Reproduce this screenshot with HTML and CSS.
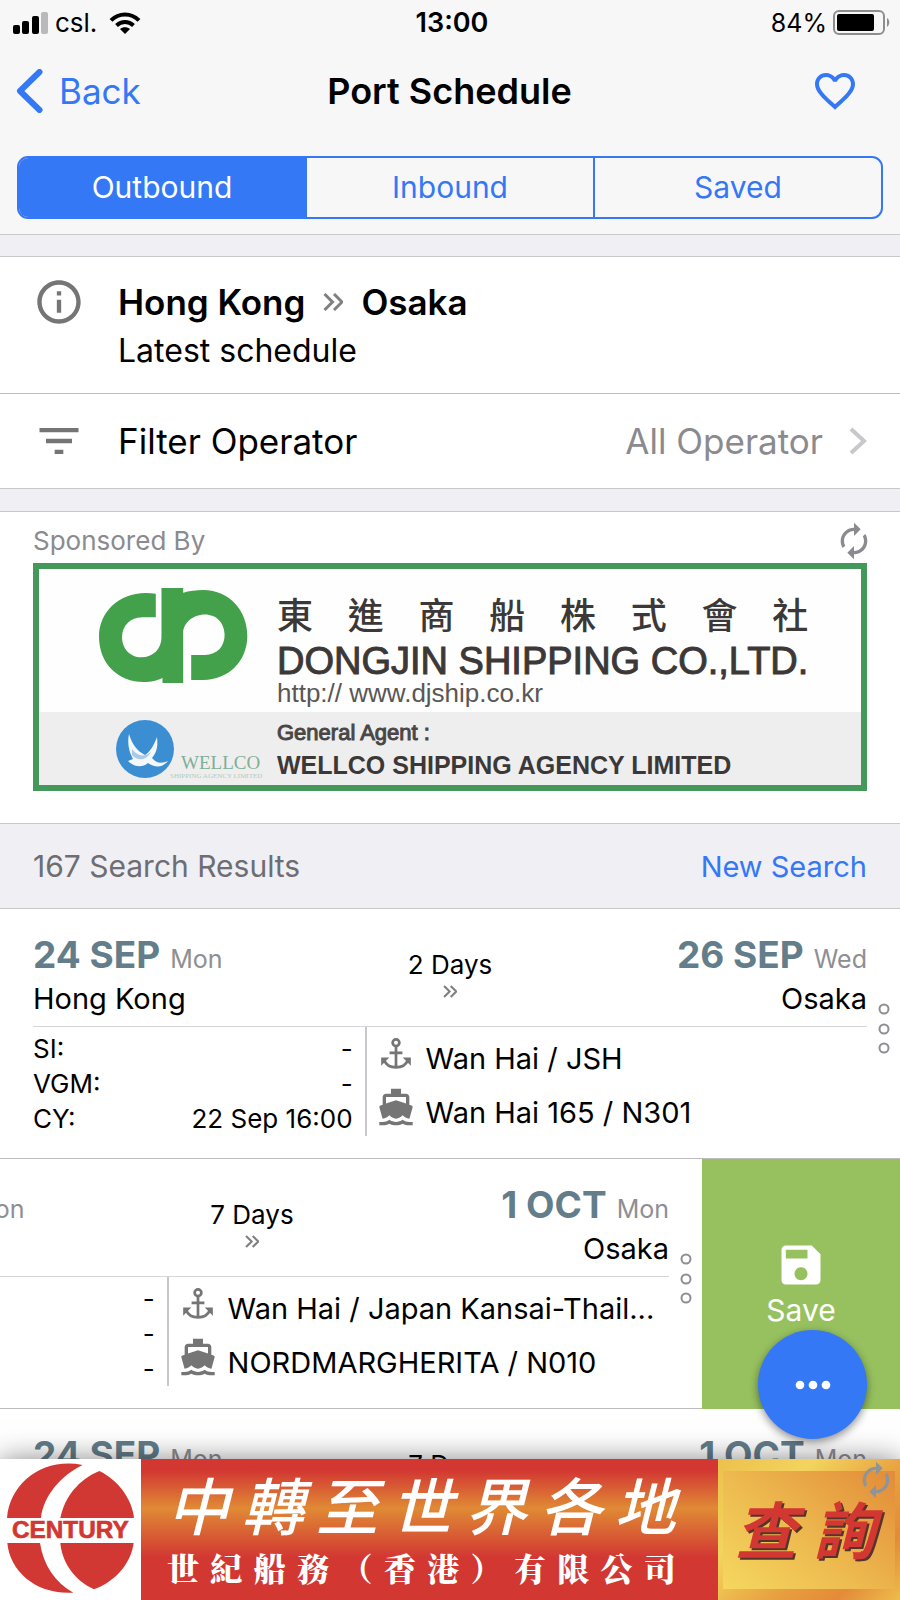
FILE: index.html
```html
<!DOCTYPE html>
<html lang="en">
<head>
<meta charset="utf-8">
<meta name="viewport" content="width=device-width, initial-scale=1">
<title>Port Schedule</title>
<link rel="stylesheet" href="styles.css">
</head>
<body>
<svg class="defs" aria-hidden="true">
  <symbol id="i-double" viewBox="0 0 20 18"><path d="M1.500 1l8 8-8 8M11 1l8 8-8 8" fill="none" stroke="currentColor" stroke-width="3"/></symbol>
  <symbol id="i-refresh" viewBox="0 0 24 24"><path fill="currentColor" d="M12 6v3l4-4-4-4v3c-4.42 0-8 3.58-8 8 0 1.57.46 3.03 1.24 4.26L6.7 14.8c-.45-.83-.7-1.79-.7-2.8 0-3.31 2.69-6 6-6zm6.76 1.74L17.3 9.2c.44.84.7 1.79.7 2.8 0 3.31-2.69 6-6 6v-3l-4 4 4 4v-3c4.42 0 8-3.58 8-8 0-1.57-.46-3.03-1.24-4.26z"/></symbol>
  <symbol id="i-anchor" viewBox="0 0 88 92"><g fill="none" stroke="currentColor" stroke-width="8"><circle cx="44" cy="14" r="10"/><path d="M44 24v62M25 44h38M9 66c5 13 19 21 35 21s30-8 35-21"/></g><path fill="currentColor" d="M0 58h24L0 82zM88 58H64l24 24z"/></symbol>
  <symbol id="i-boat" viewBox="0 0 24 24"><path fill="currentColor" d="M20 21c-1.39 0-2.78-.47-4-1.32-2.44 1.71-5.56 1.71-8 0C6.78 20.53 5.39 21 4 21H2v2h2c1.38 0 2.74-.35 4-.99 2.52 1.29 5.48 1.29 8 0 1.26.65 2.62.99 4 .99h2v-2h-2zM3.95 19H4c1.6 0 3.02-.88 4-2 .98 1.12 2.4 2 4 2s3.02-.88 4-2c.98 1.12 2.4 2 4 2h.05l1.89-6.68c.08-.26.06-.54-.06-.78s-.34-.42-.6-.5L20 10.62V6c0-1.1-.9-2-2-2h-3V1H9v3H6c-1.1 0-2 .9-2 2v4.62l-1.29.42c-.26.08-.48.26-.6.5s-.15.52-.06.78L3.95 19zM6 6h12v3.97L12 8 6 9.97V6z"/></symbol>
  <symbol id="i-rings" viewBox="0 0 12 52"><g fill="none" stroke="currentColor" stroke-width="2"><circle cx="6" cy="6" r="4.5"/><circle cx="6" cy="26" r="4.5"/><circle cx="6" cy="45" r="4.5"/></g></symbol>
</svg>

<div class="app">
  <header class="header">
    <div class="status">
      <div class="status-left">
        <svg width="36" height="22" viewBox="0 0 36 22"><rect x="0" y="13" width="7" height="9" rx="2"/><rect x="9" y="9" width="7" height="13" rx="2"/><rect x="19" y="4" width="7" height="18" rx="2"/><rect x="28" y="0" width="7" height="22" rx="2" fill="#b9b9bb"/></svg>
        <span>csl.</span>
        <svg class="wifi" width="32" height="22" viewBox="0 0 32 22"><g fill="none" stroke="#000" stroke-width="4"><path d="M2 8.300C10 .400 22 .400 30 8.300"/><path d="M7.500 13.500c5-4.600 12-4.600 17 0"/></g><path d="M16 22l-5-5c2.800-2.400 7.200-2.400 10 0z"/></svg>
      </div>
      <time class="clock">13:00</time>
      <div class="status-right">
        <span>84%</span>
        <svg width="58" height="26" viewBox="0 0 58 26"><rect x="1" y="1" width="50" height="23" rx="5" fill="none" stroke="#8e8e8e" stroke-width="2"/><rect x="4" y="4" width="37" height="17" rx="2"/><path d="M54 8c3 1.500 3 7 0 9z" fill="#8e8e8e"/></svg>
      </div>
    </div>
    <nav class="nav">
      <button class="back" type="button">
        <svg width="28" height="44" viewBox="0 0 28 44"><path d="M23.500 3L4 22l19.500 19" fill="none" stroke="currentColor" stroke-width="6" stroke-linecap="round" stroke-linejoin="round"/></svg>
        Back
      </button>
      <h1 class="title">Port Schedule</h1>
      <button class="favorite" type="button" aria-label="Favorite">
        <svg width="48" height="48" viewBox="0 0 24 24"><path fill="currentColor" d="M16.500 3c-1.740 0-3.410.810-4.500 2.090C10.910 3.810 9.240 3 7.500 3 4.420 3 2 5.420 2 8.500c0 3.780 3.400 6.860 8.550 11.540L12 21.350l1.450-1.320C18.600 15.360 22 12.280 22 8.500 22 5.420 19.580 3 16.500 3zm-4.400 15.550l-.100.100-.100-.100C7.140 14.240 4 11.390 4 8.500 4 6.500 5.500 5 7.500 5c1.540 0 3.040.990 3.570 2.360h1.870C13.460 5.990 14.960 5 16.500 5c2 0 3.500 1.500 3.500 3.500 0 2.890-3.140 5.740-7.900 10.050z"/></svg>
      </button>
    </nav>
    <div class="segments">
      <button class="segment active" type="button">Outbound</button>
      <button class="segment" type="button">Inbound</button>
      <button class="segment" type="button">Saved</button>
    </div>
  </header>

  <section class="group">
    <div class="info-row">
      <div class="lead"><svg width="52" height="52" viewBox="0 0 24 24"><path fill="currentColor" d="M11 17h2v-6h-2v6zm1-15C6.480 2 2 6.480 2 12s4.480 10 10 10 10-4.480 10-10S17.520 2 12 2zm0 18c-4.410 0-8-3.590-8-8s3.590-8 8-8 8 3.590 8 8-3.590 8-8 8zM11 9h2V7h-2v2z"/></svg></div>
      <div class="info-text">
        <h2 class="route">Hong Kong <svg class="route-arrow" width="20" height="18"><use href="#i-double"/></svg> Osaka</h2>
        <p class="sub">Latest schedule</p>
      </div>
    </div>
    <button class="filter-row" type="button">
      <span class="lead"><svg width="52" height="52" viewBox="0 0 24 24"><path fill="currentColor" d="M10 18h4v-2h-4v2zM3 6v2h18V6H3zm3 7h12v-2H6v2z"/></svg></span>
      <span class="filter-label">Filter Operator</span>
      <span class="filter-value">All Operator</span>
      <svg class="chevron" width="18" height="28" viewBox="0 0 18 28"><path d="M2 2l13 12L2 26" fill="none" stroke="currentColor" stroke-width="4"/></svg>
    </button>
  </section>

  <section class="sponsor">
    <div class="sponsor-head">
      <span>Sponsored By</span>
      <button class="refresh" type="button" aria-label="Refresh sponsor"><svg width="40" height="40"><use href="#i-refresh"/></svg></button>
    </div>
    <a class="banner" href="#dongjin">
      <span class="banner-top">
        <svg class="dj-logo" width="149" height="97" viewBox="238 112 446 290"><g fill="#43a04b"><path d="M408 132C310 116 238 180 238 260c0 85 62 140 142 136 20-1 40-8 48-12v15h62V115h-65v147c0 35-25 60-60 60s-58-27-58-60c0-35 25-60 60-60h41z"/><path d="M488 130c20-7 42-9 62-9 80 0 132 64 132 137 0 77-57 132-132 132h-36v-75h41c37 0 59-25 59-60s-24-61-59-61c-37 0-67 26-67 64z"/></g></svg>
        <span class="dj-text">
          <span class="dj-cjk" lang="zh-Hant">東進商船株式會社</span>
          <span class="dj-name">DONGJIN SHIPPING CO.,LTD.</span>
          <span class="dj-url">http:// www.djship.co.kr</span>
        </span>
      </span>
      <span class="banner-bottom">
        <svg class="wellco" width="149" height="62" viewBox="0 0 149 62"><circle cx="30" cy="29" r="29" fill="#3b8ed2"/><path d="M14 14c3 10 8 17 16 21 5-3 9-10 12-18 1 9 0 15-5 21 4 5 9 6 16 3-6 7-13 7-20 2-6 5-14 4-20-2l5-2c-4-7-6-16-4-25z" fill="#f4f8fc"/><path d="M17 29c5 7 12 9 19 3-4 8-13 10-19 3z" fill="#a9c9e6"/><text x="66" y="49" class="wellco-name">WELLCO</text><text x="55" y="58" class="wellco-sub">SHIPPING AGENCY LIMITED</text></svg>
        <span class="agent-text">
          <span class="agent-label">General Agent :</span>
          <span class="agent-name">WELLCO SHIPPING AGENCY LIMITED</span>
        </span>
      </span>
    </a>
  </section>

  <div class="results">
    <span>167 Search Results</span>
    <a class="new-search" href="#search">New Search</a>
  </div>

  <main class="list">
    <article class="row">
      <div class="card">
        <div class="card-body">
          <div class="voyage">
            <div class="stop"><p class="when"><b class="date">24 SEP</b> <span class="day">Mon</span></p><p>Hong Kong</p></div>
            <div class="transit"><span>2 Days</span><svg width="14" height="13"><use href="#i-double"/></svg></div>
            <div class="stop end"><p class="when"><b class="date">26 SEP</b> <span class="day">Wed</span></p><p>Osaka</p></div>
          </div>
          <div class="details">
            <dl class="cutoffs">
              <dt>SI:</dt><dd>-</dd>
              <dt>VGM:</dt><dd>-</dd>
              <dt>CY:</dt><dd>22 Sep 16:00</dd>
            </dl>
            <div class="vessel">
              <p><svg class="vessel-icon" width="40" height="31"><use href="#i-anchor"/></svg>Wan Hai / JSH</p>
              <p><svg class="vessel-icon" width="40" height="40"><use href="#i-boat"/></svg>Wan Hai 165 / N301</p>
            </div>
          </div>
        </div>
        <button class="more" type="button" aria-label="More"><svg width="12" height="52"><use href="#i-rings"/></svg></button>
      </div>
    </article>

    <article class="row swiped">
      <div class="card">
        <div class="card-body">
          <div class="voyage">
            <div class="stop"><p class="when"><b class="date">24 SEP</b> <span class="day">Mon</span></p><p>Hong Kong</p></div>
            <div class="transit"><span>7 Days</span><svg width="14" height="13"><use href="#i-double"/></svg></div>
            <div class="stop end"><p class="when"><b class="date">1 OCT</b> <span class="day">Mon</span></p><p>Osaka</p></div>
          </div>
          <div class="details">
            <dl class="cutoffs">
              <dt>SI:</dt><dd>-</dd>
              <dt>VGM:</dt><dd>-</dd>
              <dt>CY:</dt><dd>-</dd>
            </dl>
            <div class="vessel">
              <p><svg class="vessel-icon" width="40" height="31"><use href="#i-anchor"/></svg>Wan Hai / Japan Kansai-Thail...</p>
              <p><svg class="vessel-icon" width="40" height="40"><use href="#i-boat"/></svg>NORDMARGHERITA / N010</p>
            </div>
          </div>
        </div>
        <button class="more" type="button" aria-label="More"><svg width="12" height="52"><use href="#i-rings"/></svg></button>
      </div>
      <button class="save" type="button">
        <svg width="52" height="52" viewBox="0 0 24 24"><path fill="currentColor" d="M17 3H5c-1.110 0-2 .900-2 2v14c0 1.100.890 2 2 2h14c1.100 0 2-.900 2-2V7l-4-4zm-5 16c-1.660 0-3-1.340-3-3s1.340-3 3-3 3 1.340 3 3-1.340 3-3 3zm3-10H5V5h10v4z"/></svg>
        Save
      </button>
    </article>

    <article class="row">
      <div class="card">
        <div class="card-body">
          <div class="voyage">
            <div class="stop"><p class="when"><b class="date">24 SEP</b> <span class="day">Mon</span></p></div>
            <div class="transit"><span>7 Days</span></div>
            <div class="stop end"><p class="when"><b class="date">1 OCT</b> <span class="day">Mon</span></p></div>
          </div>
        </div>
        <div class="more"></div>
      </div>
    </article>
  </main>

  <button class="fab" type="button" aria-label="Options"><svg width="52" height="52" viewBox="0 0 24 24"><g fill="#fff"><circle cx="6" cy="12" r="2"/><circle cx="12" cy="12" r="2"/><circle cx="18" cy="12" r="2"/></g></svg></button>

  <footer class="ad">
    <div class="ad-logo">
      <svg width="141" height="140" viewBox="0 180 423 420"><g fill="#d23833"><path d="M21 357C30 250 130 175 248 198 185 228 130 290 123 357z"/><path d="M181 357c12-62 55-116 117-141 58 28 98 85 104 141z"/><path d="M22 432h98c10 66 45 118 100 149C112 588 30 520 22 432z"/><path d="M181 432h220c-8 62-56 116-119 139-58-26-96-80-101-139z"/></g><text x="36" y="416" class="century">CENTURY</text></svg>
    </div>
    <div class="ad-main" lang="zh-Hant">
      <p class="ad-line1">中轉至世界各地</p>
      <p class="ad-line2">世紀船務（香港）有限公司</p>
    </div>
    <a class="ad-cta" href="#enquiry" lang="zh-Hant"><span>查詢</span></a>
    <button class="ad-refresh" type="button" aria-label="Refresh ad"><svg width="40" height="40"><use href="#i-refresh"/></svg></button>
  </footer>
</div>
</body>
</html>
```
FILE: styles.css
```css
* { box-sizing: border-box; }
body, h1, h2, p, dl, dd { margin: 0; }
body { font-family: Inter, "Liberation Sans", "Noto Sans CJK TC", sans-serif; font-size: 30px; color: #000; background: #fff; }
button { padding: 0; border: 0; background: none; font: inherit; color: inherit; cursor: pointer; }
a { color: inherit; text-decoration: none; }
svg { display: block; flex: none; }
.defs { position: absolute; width: 0; height: 0; }
.app { position: relative; height: 100vh; overflow: hidden; }

.header { background: #f7f7f7; border-bottom: 1px solid #c8c7cc; padding-bottom: 15px; }
.status { display: grid; grid-template-columns: 1fr auto 1fr; align-items: center; height: 45px; padding: 0 9px 0 13px; font-size: 26px; }
.status-left, .status-right { display: flex; align-items: center; gap: 6px; }
.status-right { justify-content: flex-end; font-size: 25px; }
.wifi { margin-left: 6px; }
.clock { font-size: 27px; font-weight: 600; }
.nav { display: grid; grid-template-columns: 1fr auto 1fr; align-items: center; height: 91px; padding: 0 41px 0 16px; }
.back { display: flex; align-items: center; gap: 15px; justify-self: start; color: #3478f6; font-size: 35px; }
.title { font-size: 36px; font-weight: 600; padding-left: 24px; }
.favorite { justify-self: end; color: #3478f6; }
.segments { display: flex; margin: 20px 17px 0; border: 2px solid #3478f6; border-radius: 11px; overflow: hidden; }
.segment { flex: 1; height: 59px; padding-bottom: 2px; color: #3478f6; font-size: 30px; border-left: 2px solid #3478f6; }
.segment:first-child { border-left: 0; }
.segment.active { background: #3478f6; color: #fff; }

.group { border-top: 22px solid #efeff4; background: #fff; }
.info-row { display: flex; padding: 22px 0; box-shadow: 0 -1px #c8c7cc; border-bottom: 1px solid #bcbbc0; }
.lead { flex: none; width: 118px; display: flex; justify-content: center; color: #757575; }
.info-row .lead { height: 46px; align-items: center; }
.route { display: flex; align-items: center; gap: 18px; font-size: 35px; line-height: 46px; font-weight: 600; }
.route-arrow { color: #808080; }
.sub { margin-top: 6px; font-size: 32px; line-height: 40px; }
.filter-row { display: flex; align-items: center; width: 100%; height: 95px; padding-right: 33px; border-bottom: 1px solid #c8c7cc; font-size: 35px; text-align: left; }
.filter-label { flex: 1; }
.filter-value { color: #8a8a8f; }
.chevron { margin-left: 26px; color: #c7c7cc; }

.sponsor { border-top: 22px solid #efeff4; border-bottom: 1px solid #c8c7cc; padding: 0 33px 32px; }
.sponsor-head { display: flex; align-items: center; justify-content: space-between; height: 52px; margin: 0 -33px; padding: 6px 26px 0 33px; border-top: 1px solid #c8c7cc; color: #8a8a8f; font-size: 26px; }
.banner { display: block; border: 6px solid #43985a; background: #fefefe; color: #3c3837; font-family: "Liberation Sans", Arial, sans-serif; }
.banner-top { display: flex; gap: 29px; height: 143px; padding: 18px 54px 0 60px; }
.dj-text { flex: 1; display: flex; flex-direction: column; padding-top: 6px; }
.dj-cjk { font-family: "Noto Sans CJK TC", sans-serif; font-weight: 500; font-size: 36px; line-height: 40px; text-align: justify; text-align-last: justify; }
.dj-name { margin-top: 8px; font-size: 38px; line-height: 40px; white-space: nowrap; -webkit-text-stroke: 1px #3c3837; }
.dj-url { font-size: 26px; line-height: 24px; color: #5a5655; }
.banner-bottom { display: flex; gap: 13px; height: 73px; padding: 8px 0 0 76px; background: #eee; }
.wellco-name { font: 19px "Liberation Serif", serif; fill: #7fae97; }
.wellco-sub { font: 7px "Liberation Serif", serif; fill: #b4cbbf; }
.agent-text { display: flex; flex-direction: column; gap: 4px; }
.agent-label { font-size: 22px; line-height: 26px; -webkit-text-stroke: 1px #4a4645; color: #4a4645; }
.agent-name { font-size: 25px; line-height: 30px; font-weight: 700; white-space: nowrap; }

.results { display: flex; align-items: center; justify-content: space-between; height: 85px; padding: 0 33px; background: #efeff4; border-bottom: 1px solid #c8c7cc; color: #6d6d72; }
.new-search { color: #3478f6; font-size: 29px; }

.row { display: flex; overflow: hidden; }
.card { flex: 0 0 100%; display: flex; min-height: 250px; border-bottom: 1px solid #bcbbc0; padding: 24px 0 18px 33px; background: #fff; font-size: 29px; }
.swiped .card { margin-left: -198px; }
.card-body { flex: 1; min-width: 0; }
.voyage { display: grid; grid-template-columns: 1fr auto 1fr; padding-bottom: 5px; border-bottom: 1px solid #d5d5d8; line-height: 44px; }
.when { display: flex; align-items: baseline; gap: 10px; height: 44px; }
.end { text-align: right; }
.end .when { justify-content: flex-end; }
.date { font-size: 37px; color: #647d8b; }
.day { font-size: 25px; color: #8e8e93; }
.transit { display: flex; flex-direction: column; align-items: center; gap: 4px; padding-top: 16px; font-size: 26px; line-height: 32px; }
.transit svg { color: #808080; }
.details { display: flex; align-items: flex-start; }
.cutoffs { flex: 0 0 40%; display: grid; grid-template-columns: auto 1fr; padding: 4px 12px 0 0; border-right: 2px solid #c8c7cc; font-size: 26px; line-height: 35px; }
.cutoffs dd { text-align: right; }
.vessel { flex: 1; min-width: 0; padding: 4px 0 0 9px; }
.vessel p { display: flex; align-items: center; gap: 10px; height: 54px; white-space: nowrap; }
.vessel-icon { color: #757575; margin-bottom: 10px; }
.more { flex: 0 0 33px; display: flex; justify-content: center; padding-top: 70px; align-items: flex-start; color: #8e8e93; }
.save { flex: 0 0 198px; display: flex; flex-direction: column; align-items: center; justify-content: center; background: #97c15f; color: #fff; font-size: 30px; line-height: 38px; }

.fab { position: absolute; right: 33px; bottom: 161px; width: 109px; height: 109px; display: grid; place-items: center; border-radius: 50%; background: #3478f6; box-shadow: 0 3px 8px rgba(0, 0, 0, .45); z-index: 1; }

.ad { position: absolute; left: 0; right: 0; bottom: 0; display: flex; height: 141px; background: #fff; box-shadow: 0 4px 30px rgba(0, 0, 0, .6); }
.ad-logo { flex: none; }
.century { font: bold 73px "Liberation Sans", Arial, sans-serif; fill: #d23833; stroke: #d23833; stroke-width: 2px; }
.ad-main { flex: 1; padding: 12px 42px 0 26px; background: linear-gradient(#d23732 8%, #e08a35 35%, #d23732 70%); color: #fff; font-family: "Noto Sans CJK TC", sans-serif; font-weight: 500; }
.ad-line1 { font-size: 62px; line-height: 64px; font-style: italic; text-align-last: justify; }
.ad-line2 { margin-top: 15px; font-family: "Noto Serif CJK TC", "Noto Sans CJK TC", serif; font-weight: 900; font-size: 32px; line-height: 34px; text-align-last: justify; }
.ad-cta { flex: 0 0 182px; padding: 12px 5px 11px; background: linear-gradient(135deg, #ecc04c, #f3d45e 30%, #e8a040 60%, #e38b38 80%, #eebc4c); }
.ad-cta span { display: block; height: 100%; padding: 0 20px 0 12px; background: linear-gradient(40deg, #f5d75f, #edba4f 45%, #e38b38); color: #d23732; font-family: "Noto Sans CJK TC", sans-serif; font-weight: 700; font-style: italic; font-size: 62px; line-height: 112px; text-align-last: justify; text-shadow: 2px 2px #54352a; }
.ad-refresh { position: absolute; top: 1px; right: 4px; color: #8f9499; }
```
